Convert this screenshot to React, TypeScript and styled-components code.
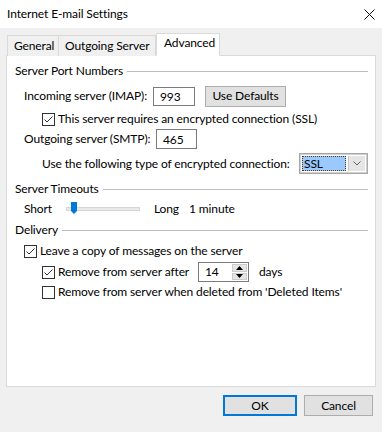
import React from "react";
import styled, { createGlobalStyle } from "styled-components";

const Global = createGlobalStyle`
  html, body { margin: 0; padding: 0; }
  body {
    font-family: "Lato", "Noto Sans", "Liberation Sans", sans-serif;
    font-size: 12px;
    letter-spacing: -0.12px;
    color: #000;
  }
`;

const Window = styled.div`
  width: 382px;
  height: 432px;
  background: #f0f0f0;
  display: flex;
  flex-direction: column;
  overflow: hidden;
`;

const TitleBar = styled.div`
  height: 28px;
  flex: none;
  background: #fff;
  display: flex;
  align-items: center;
  justify-content: space-between;
  padding: 0 7px 0 7px;
`;

const Title = styled.span`
  font-size: 12px;
  line-height: 16px;
`;

const Body = styled.div`
  flex: 1;
  display: flex;
  flex-direction: column;
  padding: 5px 6px 0 6px;
  min-height: 0;
`;

const TabStrip = styled.div`
  display: flex;
  align-items: flex-end;
  height: 23px;
  padding-left: 1px;
  margin-bottom: -1px;
  position: relative;
  z-index: 1;
`;

const Tab = styled.div<{ $active?: boolean; $w: number }>`
  box-sizing: border-box;
  width: ${(p) => p.$w}px;
  height: ${(p) => (p.$active ? 23 : 21)}px;
  padding: ${(p) => (p.$active ? "1px 0 0 7px" : "2px 0 0 6px")};
  background: ${(p) => (p.$active ? "#fff" : "#f0f0f0")};
  border: 1px solid #d9d9d9;
  border-bottom: ${(p) => (p.$active ? "1px solid #fff" : "none")};
  margin-left: ${(p) => (p.$active ? "0" : "-1px")};
  line-height: 16px;
  white-space: nowrap;
  &:first-child {
    margin-left: 0;
  }
`;

const Panel = styled.div`
  flex: 1;
  background: #fff;
  border: 1px solid #d9d9d9;
  padding: 5px 7px 0 8px;
  display: flex;
  flex-direction: column;
`;

const Row = styled.div<{ $indent?: number; $mt?: number; $h?: number }>`
  display: flex;
  align-items: center;
  height: ${(p) => p.$h ?? 20}px;
  margin-top: ${(p) => p.$mt ?? 0}px;
  padding-left: ${(p) => p.$indent ?? 0}px;
  white-space: nowrap;
`;

const GroupTitle = styled.span`
  line-height: 16px;
`;

const GroupRule = styled.div`
  flex: 1;
  height: 1px;
  background: #a0a0a0;
  margin-left: 4px;
  opacity: 0.7;
`;

const Label = styled.span<{ $w?: number; $ml?: number }>`
  display: inline-block;
  width: ${(p) => (p.$w ? `${p.$w}px` : "auto")};
  margin-left: ${(p) => p.$ml ?? 0}px;
  line-height: 16px;
  flex: none;
`;

const TextBox = styled.div<{ $w: number; $h: number }>`
  box-sizing: border-box;
  width: ${(p) => p.$w}px;
  height: ${(p) => p.$h}px;
  border: 1px solid #7a7a7a;
  background: #fff;
  padding-left: 6px;
  display: flex;
  align-items: center;
`;

const Button = styled.div<{ $w: number; $default?: boolean; $ml?: number }>`
  box-sizing: border-box;
  width: ${(p) => p.$w}px;
  height: 21px;
  margin-left: ${(p) => p.$ml ?? 0}px;
  background: #e1e1e1;
  border: ${(p) => (p.$default ? "2px solid #0078d7" : "1px solid #adadad")};
  display: flex;
  align-items: center;
  justify-content: center;
  line-height: 16px;
`;

const Box = styled.div`
  box-sizing: border-box;
  width: 13px;
  height: 13px;
  border: 1px solid #333;
  background: #fff;
  margin-right: 3px;
  flex: none;
  display: flex;
  align-items: center;
  justify-content: center;
`;

const Select = styled.div`
  box-sizing: border-box;
  width: 69px;
  height: 21px;
  border: 2px solid #cfcfcf;
  outline: 1px solid #a8a8a8;
  outline-offset: -1px;
  background: #fff;
  display: flex;
  padding: 1px;
`;

const SelectField = styled.div`
  flex: 1;
  background: #99c9ff;
  border: 1px dotted #5a3a10;
  line-height: 13px;
  padding-left: 1px;
`;

const SelectButton = styled.div`
  width: 16px;
  margin-left: 2px;
  background: #e5e5e5;
  border-left: 1px solid #c4c4c4;
  display: flex;
  align-items: center;
  justify-content: center;
`;

const Slider = styled.div`
  position: relative;
  width: 74px;
  height: 12px;
  display: flex;
  align-items: center;
`;

const Track = styled.div`
  box-sizing: border-box;
  width: 100%;
  height: 4px;
  background: #e7eaea;
  border: 1px solid #d6d6d6;
`;

const Thumb = styled.svg`
  position: absolute;
  left: 5px;
  top: -1px;
`;

const Spin = styled.div`
  box-sizing: border-box;
  width: 51px;
  height: 20px;
  border: 1px solid #7a7a7a;
  background: #fff;
  display: flex;
`;

const SpinValue = styled.div`
  flex: 1;
  padding-left: 6px;
  display: flex;
  align-items: center;
  line-height: 16px;
`;

const SpinButtons = styled.div`
  width: 15px;
  display: flex;
  flex-direction: column;
  gap: 1px;
  padding: 1px 1px 1px 0;
`;

const SpinButton = styled.div`
  flex: 1;
  background: #e5e5e5;
  border: 1px solid #cccccc;
  display: flex;
  align-items: center;
  justify-content: center;
`;

const Footer = styled.div`
  height: 37px;
  flex: none;
  display: flex;
  justify-content: flex-end;
  align-items: flex-start;
  padding: 8px 3px 0 0;
`;

const Check = ({ checked }: { checked?: boolean }) => (
  <Box>
    {checked && (
      <svg width="11" height="11" viewBox="0 0 11 11">
        <polyline
          points="1.5,5.5 4,8 9.5,2.5"
          fill="none"
          stroke="#333"
          strokeWidth="1"
        />
      </svg>
    )}
  </Box>
);

const Group = ({ title, mt }: { title: string; mt: number }) => (
  <Row $mt={mt}>
    <GroupTitle>{title}</GroupTitle>
    <GroupRule />
  </Row>
);

export default function App() {
  return (
    <Window>
      <Global />
      <TitleBar>
        <Title>Internet E-mail Settings</Title>
        <svg width="11" height="11" viewBox="0 0 11 11">
          <path d="M0.5 0.5 L10.5 10.5 M10.5 0.5 L0.5 10.5" stroke="#111" strokeWidth="1" />
        </svg>
      </TitleBar>
      <Body>
        <TabStrip>
          <Tab $w={52}>General</Tab>
          <Tab $w={98}>Outgoing Server</Tab>
          <Tab $w={64} $active>
            Advanced
          </Tab>
        </TabStrip>
        <Panel>
          <Group title="Server Port Numbers" mt={0} />
          <Row $indent={9} $mt={5}>
            <Label $w={129}>Incoming server (IMAP):</Label>
            <TextBox $w={42} $h={19}>993</TextBox>
            <Button $w={81} $ml={10}>
              Use Defaults
            </Button>
          </Row>
          <Row $indent={27} $mt={3}>
            <Check checked />
            <Label>This server requires an encrypted connection (SSL)</Label>
          </Row>
          <Row $indent={9} $mt={0}>
            <Label $w={132}>Outgoing server (SMTP):</Label>
            <TextBox $w={41} $h={20}>465</TextBox>
          </Row>
          <Row $indent={27} $mt={4} $h={21}>
            <Label $w={257}>Use the following type of encrypted connection:</Label>
            <Select>
              <SelectField>SSL</SelectField>
              <SelectButton>
                <svg width="8" height="5" viewBox="0 0 8 5">
                  <polyline points="0.5,0.5 4,4 7.5,0.5" fill="none" stroke="#606060" strokeWidth="1" />
                </svg>
              </SelectButton>
            </Select>
          </Row>
          <Group title="Server Timeouts" mt={5} />
          <Row $indent={9}>
            <Label $w={42}>Short</Label>
            <Slider>
              <Track />
              <Thumb width="6" height="12" viewBox="0 0 6 12">
                <path d="M0 0 H6 V9 L3 12 L0 9 Z" fill="#0078d7" />
              </Thumb>
            </Slider>
            <Label $w={35} $ml={14}>
              Long
            </Label>
            <Label>1 minute</Label>
          </Row>
          <Group title="Delivery" mt={1} />
          <Row $indent={9} $mt={1}>
            <Check checked />
            <Label>Leave a copy of messages on the server</Label>
          </Row>
          <Row $indent={27} $mt={1}>
            <Check checked />
            <Label $w={140}>Remove from server after</Label>
            <Spin>
              <SpinValue>14</SpinValue>
              <SpinButtons>
                <SpinButton>
                  <svg width="7" height="4" viewBox="0 0 7 4">
                    <path d="M0 4 L3.5 0 L7 4 Z" fill="#000" />
                  </svg>
                </SpinButton>
                <SpinButton>
                  <svg width="7" height="4" viewBox="0 0 7 4">
                    <path d="M0 0 L3.5 4 L7 0 Z" fill="#000" />
                  </svg>
                </SpinButton>
              </SpinButtons>
            </Spin>
            <Label $ml={10}>days</Label>
          </Row>
          <Row $indent={27} $mt={0}>
            <Check />
            <Label>Remove from server when deleted from 'Deleted Items'</Label>
          </Row>
        </Panel>
        <Footer>
          <Button $w={74} $default>
            OK
          </Button>
          <Button $w={69} $ml={7}>
            Cancel
          </Button>
        </Footer>
      </Body>
    </Window>
  );
}
